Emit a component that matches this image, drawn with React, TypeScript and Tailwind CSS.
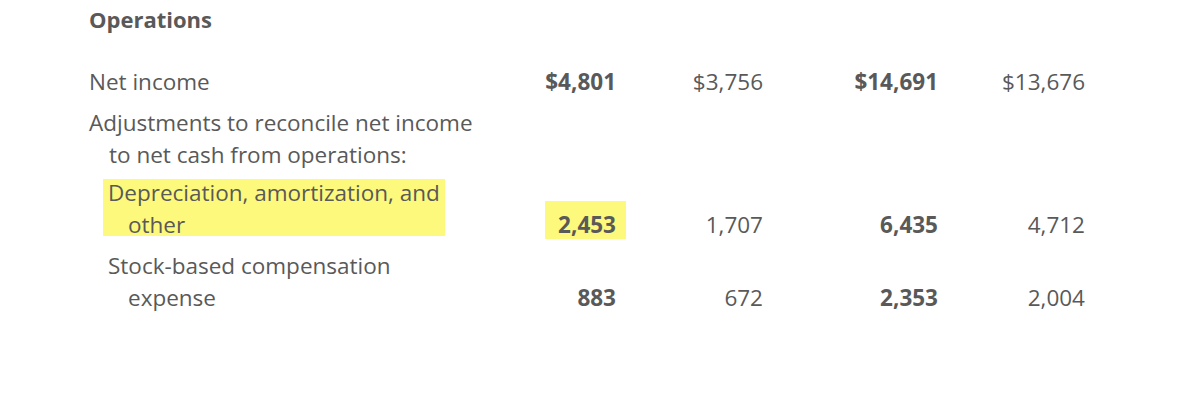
import React from "react";

type Row = {
  lines: string[];
  values?: [string, string, string, string];
  highlight?: boolean;
  indent?: boolean;
  gap: string;
};

const rows: Row[] = [
  { lines: ["Net income"], values: ["$4,801", "$3,756", "$14,691", "$13,676"], gap: "mt-[32px]" },
  { lines: ["Adjustments to reconcile net income", "to net cash from operations:"], gap: "mt-[9px]" },
  {
    lines: ["Depreciation, amortization, and", "other"],
    values: ["2,453", "1,707", "6,435", "4,712"],
    highlight: true,
    indent: true,
    gap: "mt-[6px]",
  },
  {
    lines: ["Stock-based compensation", "expense"],
    values: ["883", "672", "2,353", "2,004"],
    indent: true,
    gap: "mt-[9px]",
  },
];

function Label({ row }: { row: Row }) {
  const text = (
    <>
      <div>{row.lines[0]}</div>
      {row.lines[1] && <div className="pl-[20px]">{row.lines[1]}</div>}
    </>
  );
  if (row.highlight) {
    return (
      <div className="mb-[5px] ml-[14px] mt-[2px] h-[57px] w-fit justify-self-start bg-[#fdf97c] px-[5px]">
        <div className="-mt-[2px]">{text}</div>
      </div>
    );
  }
  return <div className={row.indent ? "pl-[19px]" : ""}>{text}</div>;
}

export default function App() {
  return (
    <div
      className="h-[413px] w-[1200px] bg-white pl-[89px] pt-[4px] text-[#595959]"
      style={{ fontFamily: '"Open Sans", "Noto Sans", sans-serif' }}
    >
      <div className="text-[22px] font-bold leading-[30px]">Operations</div>
      {rows.map((row, i) => (
        <div
          key={i}
          className={`grid grid-cols-[440px_87px_147px_175px_147px] text-[22.5px] leading-[32px] ${row.gap}`}
        >
          <Label row={row} />
          {row.values &&
            row.values.map((v, j) => {
              const bold = j % 2 === 0;
              const hl = row.highlight && j === 0;
              return (
                <div key={j} className="flex flex-col items-end justify-end">
                  <div
                    className={`${bold ? "font-bold" : ""} ${
                      hl ? "-mr-[10px] mb-[2px] h-[38px] bg-[#fdf97c] pl-[13px] pr-[10px] pt-[8px]" : ""
                    }`}
                  >
                    {v}
                  </div>
                </div>
              );
            })}
        </div>
      ))}
    </div>
  );
}
